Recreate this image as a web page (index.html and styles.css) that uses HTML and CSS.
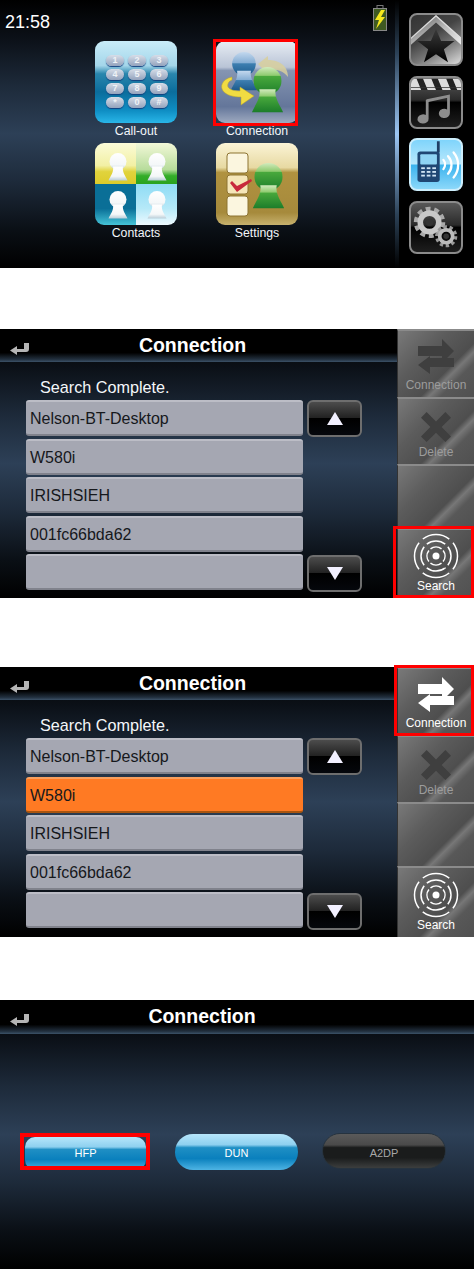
FILE: index.html
```html
<!DOCTYPE html>
<html lang="en">
<head>
    <meta charset="UTF-8">
    <meta name="viewport" content="width=device-width, initial-scale=1.0">
    <title>Bluetooth Connection Guide</title>
    <link rel="stylesheet" href="styles.css">
</head>
<body>
    <svg class="defs" width="0" height="0">
        <defs>
            <linearGradient id="g-green" x1="0" y1="0" x2="0" y2="1"><stop offset="0" stop-color="#d3ebbe"/><stop offset=".3" stop-color="#8fcb70"/><stop offset=".34" stop-color="#48a83c"/><stop offset="1" stop-color="#1c7d2a"/></linearGradient>
            <linearGradient id="g-blue" x1="0" y1="0" x2="0" y2="1"><stop offset="0" stop-color="#c3d8ee"/><stop offset=".45" stop-color="#86aed4"/><stop offset=".5" stop-color="#3d7eb0"/><stop offset="1" stop-color="#1d5a8c"/></linearGradient>
            <linearGradient id="g-white" x1="0" y1="0" x2="0" y2="1"><stop offset="0" stop-color="#fff"/><stop offset=".7" stop-color="#f4f7f8"/><stop offset="1" stop-color="#b9cdd8"/></linearGradient>
            <linearGradient id="g-silver" x1="0" y1="0" x2="1" y2="1"><stop offset="0" stop-color="#555"/><stop offset=".55" stop-color="#bbb"/><stop offset="1" stop-color="#eee"/></linearGradient>
            <linearGradient id="g-star" x1="0" y1="0" x2="0" y2="1"><stop offset="0" stop-color="#3a3a3a"/><stop offset="1" stop-color="#000"/></linearGradient>
            <symbol id="person" viewBox="0 0 40 56"><ellipse cx="20" cy="17" rx="17" ry="17"/><path d="M10 27C12 38 5 46 1 55H39C35 46 28 38 30 27Z"/></symbol>
            <symbol id="back" viewBox="0 0 20 14"><path d="M14 1h5v6q0 3-3 3H7v3L0 8.500 7 4v3h7z" fill="#b5b5b5"/></symbol>
            <symbol id="swap" viewBox="0 0 36 36"><path d="M0 7h24V0l12 12-12 12v-7H0zM36 19v9H12v7L0 26l12-9v2z" fill="currentColor"/></symbol>
            <symbol id="cross" viewBox="0 0 32 32"><path d="M6 0l10 10L26 0l6 6-10 10 10 10-6 6-10-10L6 32l-6-6 10-10L0 6z" fill="currentColor"/></symbol>
            <symbol id="radar" viewBox="0 0 46 46">
                <g fill="none" stroke="#fff" stroke-width="1.500" transform="rotate(-37.800 23 23)">
                    <circle cx="23" cy="23" r="9" pathLength="100" stroke-dasharray="21 4"/>
                    <circle cx="23" cy="23" r="15" pathLength="100" stroke-dasharray="21 4"/>
                    <circle cx="23" cy="23" r="21.500" pathLength="100" stroke-dasharray="21 4"/>
                </g>
                <circle cx="23" cy="23" r="3.500" fill="#fff"/>
            </symbol>
        </defs>
    </svg>

    <!-- home menu -->
    <div class="screen home">
        <div class="clock">21:58</div>
        <div class="apps">
            <div class="app">
                <div class="tile tile-keypad">
                    <div class="keys">
                        <span>1</span><span>2</span><span>3</span>
                        <span>4</span><span>5</span><span>6</span>
                        <span>7</span><span>8</span><span>9</span>
                        <span>*</span><span>0</span><span>#</span>
                    </div>
                </div>
                <div class="app-label">Call-out</div>
            </div>
            <div class="app">
                <div class="tile tile-connection hilite">
                    <svg viewBox="0 0 82 82" width="82" height="82">
                        <use href="#person" x="14" y="11" width="28" height="39" fill="url(#g-blue)"/>
                        <path d="M42 23L52 15V19C62 19 72 24 72 36 68 30 60 28 52 28V33Z" fill="#d8cf9c" opacity=".85"/>
                        <use href="#person" x="35" y="26" width="33" height="46" fill="url(#g-green)"/>
                        <path d="M16 36C6 38 3 46 8 51 11 54 17 56 25 56V64L38 55 24 46V50C19 50 14 49 12 46 11 43 13 40 16 39Z" fill="#f1dc42" stroke="#b9a62a" stroke-width=".5"/>
                    </svg>
                </div>
                <div class="app-label">Connection</div>
            </div>
            <div class="app">
                <div class="tile tile-contacts">
                    <div class="quad q1"><svg width="20" height="28"><use href="#person" width="20" height="28" fill="url(#g-white)"/></svg></div>
                    <div class="quad q2"><svg width="20" height="28"><use href="#person" width="20" height="28" fill="url(#g-white)"/></svg></div>
                    <div class="quad q3"><svg width="20" height="28"><use href="#person" width="20" height="28" fill="url(#g-white)"/></svg></div>
                    <div class="quad q4"><svg width="20" height="28"><use href="#person" width="20" height="28" fill="url(#g-white)"/></svg></div>
                </div>
                <div class="app-label">Contacts</div>
            </div>
            <div class="app">
                <div class="tile tile-settings">
                    <svg viewBox="0 0 82 82" width="82" height="82">
                        <rect x="11" y="10" width="21" height="20" rx="3" fill="#fbf6df" stroke="#8d7433"/>
                        <rect x="11" y="32" width="21" height="19" rx="3" fill="#f5e6b8" stroke="#8d7433"/>
                        <rect x="11" y="53" width="21" height="20" rx="3" fill="#fbf6df" stroke="#8d7433"/>
                        <path d="M16 38l5 5 14-7 1 2-15 11-7-9z" fill="#c8293b"/>
                        <use href="#person" x="36" y="19" width="33" height="48" fill="url(#g-green)"/>
                    </svg>
                </div>
                <div class="app-label">Settings</div>
            </div>
        </div>
        <div class="status">
            <svg class="battery" viewBox="0 0 14 26" width="14" height="26">
                <rect x="4" y="0.500" width="6" height="3" fill="none" stroke="#777"/>
                <rect x="0.500" y="3.500" width="13" height="22" fill="#3f5a22" stroke="#888"/>
                <path d="M8 5L2 15h4l-3 9 9-12H8l4-7z" fill="#f5e81c"/>
            </svg>
        </div>
        <div class="rail">
            <div class="rail-btn rail-btn-home">
                <svg viewBox="0 0 54 54" width="50" height="50">
                    <path d="M0 24L27 0l27 24v8L27 8 0 32z" fill="url(#g-silver)"/>
                    <path d="M0 26L27 2l27 24v-1.500L27 0 0 24.500z" fill="#ddd"/>
                    <path d="M27 15l5.500 13H47l-11.500 9 4.500 14-13-8.500L14 51l4.500-14L7 28h14.500z" fill="url(#g-star)"/>
                </svg>
            </div>
            <div class="rail-btn">
                <svg viewBox="0 0 54 54" width="50" height="50">
                    <path d="M0 2h54v12H0z" fill="#ddd"/>
                    <path d="M6 2h7l5 12h-7zM22 2h7l5 12h-7zM38 2h7l5 12h-7z" fill="#222"/>
                    <path d="M0 11h54v1H0z" fill="#333"/>
                    <path d="M17 24l25-5v3l-23 5v18a6 5 0 1 1-3-4V25zM39 22h3v17a6 5 0 1 1-3-4z" fill="#8d8d8d"/>
                </svg>
            </div>
            <div class="rail-btn rail-btn-on">
                <svg viewBox="0 0 54 54" width="53" height="53">
                    <path d="M28 2h3v12h-3z" fill="#1f3f66"/>
                    <rect x="7" y="13" width="24" height="33" rx="3" fill="#1f4673"/>
                    <rect x="10" y="16" width="18" height="11" rx="1" fill="#8fd4f4"/>
                    <g fill="#cfe4f4"><rect x="11" y="30" width="4" height="2"/><rect x="17" y="30" width="4" height="2"/><rect x="23" y="30" width="4" height="2"/><rect x="11" y="34" width="4" height="2"/><rect x="17" y="34" width="4" height="2"/><rect x="23" y="34" width="4" height="2"/><rect x="11" y="38" width="4" height="2"/><rect x="17" y="38" width="4" height="2"/><rect x="23" y="38" width="4" height="2"/></g>
                    <g fill="none" stroke="#fff" stroke-width="2.500" stroke-linecap="round"><path d="M35 22a8 8 0 0 1 0 10M40 18a14 14 0 0 1 0 19M46 14a21 21 0 0 1 0 27"/></g>
                </svg>
            </div>
            <div class="rail-btn">
                <svg viewBox="0 0 54 54" width="50" height="50">
                    <circle cx="20" cy="22" r="14" fill="none" stroke="#aaa" stroke-width="6" stroke-dasharray="5 3.800"/>
                    <circle cx="20" cy="22" r="10" fill="none" stroke="#c8c8c8" stroke-width="6"/>
                    <circle cx="20" cy="22" r="4" fill="#333"/>
                    <circle cx="38" cy="37" r="10" fill="none" stroke="#999" stroke-width="4" stroke-dasharray="3.500 2.800"/>
                    <circle cx="38" cy="37" r="7" fill="none" stroke="#bbb" stroke-width="4"/>
                    <circle cx="38" cy="37" r="3" fill="#333"/>
                </svg>
            </div>
        </div>
    </div>

    <!-- search finished -->
    <div class="screen device-screen first-list">
        <div class="main">
            <div class="topbar">
                <svg class="back" width="20" height="14"><use href="#back"/></svg>
                <div class="title">Connection</div>
            </div>
            <div class="note">Search Complete.</div>
            <div class="list-wrap">
                <div class="devices">
                    <div class="device">Nelson-BT-Desktop</div>
                    <div class="device">W580i</div>
                    <div class="device">IRISHSIEH</div>
                    <div class="device">001fc66bda62</div>
                    <div class="device"></div>
                </div>
                <div class="pager">
                    <div class="page-btn"><span class="tri-up"></span></div>
                    <div class="page-btn"><span class="tri-down"></span></div>
                </div>
            </div>
        </div>
        <div class="panel">
            <div class="panel-item off pi-a"><svg width="36" height="36"><use href="#swap"/></svg><span>Connection</span></div>
            <div class="panel-item off pi-b"><svg width="30" height="30"><use href="#cross"/></svg><span>Delete</span></div>
            <div class="panel-item pi-c"></div>
            <div class="panel-item pi-d hilite"><svg width="46" height="46"><use href="#radar"/></svg><span>Search</span></div>
        </div>
    </div>

    <!-- device selected -->
    <div class="screen device-screen second-list">
        <div class="main">
            <div class="topbar">
                <svg class="back" width="20" height="14"><use href="#back"/></svg>
                <div class="title">Connection</div>
            </div>
            <div class="note">Search Complete.</div>
            <div class="list-wrap">
                <div class="devices">
                    <div class="device">Nelson-BT-Desktop</div>
                    <div class="device picked">W580i</div>
                    <div class="device">IRISHSIEH</div>
                    <div class="device">001fc66bda62</div>
                    <div class="device"></div>
                </div>
                <div class="pager">
                    <div class="page-btn"><span class="tri-up"></span></div>
                    <div class="page-btn"><span class="tri-down"></span></div>
                </div>
            </div>
        </div>
        <div class="panel">
            <div class="panel-item pi-a hilite"><svg width="36" height="36"><use href="#swap"/></svg><span>Connection</span></div>
            <div class="panel-item off pi-b"><svg width="30" height="30"><use href="#cross"/></svg><span>Delete</span></div>
            <div class="panel-item pi-c"></div>
            <div class="panel-item pi-d"><svg width="46" height="46"><use href="#radar"/></svg><span>Search</span></div>
        </div>
    </div>

    <!-- profile choice -->
    <div class="screen profile-screen">
        <div class="topbar wide">
            <svg class="back" width="20" height="14"><use href="#back"/></svg>
            <div class="title">Connection</div>
        </div>
        <div class="profiles">
            <div class="pill pill-hfp pill-blue hilite">HFP</div>
            <div class="pill pill-dun pill-blue">DUN</div>
            <div class="pill pill-a2dp pill-dark">A2DP</div>
        </div>
    </div>
</body>
</html>
```

FILE: styles.css
```css
* { margin: 0; padding: 0; box-sizing: border-box; }
body { margin: 0; background: #fff; font-family: "Liberation Sans", Arial, sans-serif; color: #fff; width: 476px; }
.defs { display: block; height: 0; }

.screen { width: 474px; background: linear-gradient(180deg, #000 0%, #0b1017 14%, #1d2a3a 32%, #2d4057 50%, #1d2a3a 68%, #0a0f15 86%, #000 100%); }
.hilite { position: relative; }
.hilite::after { content: ""; position: absolute; border: 3px solid #f00; }

/* home */
.home { display: flex; height: 268px; margin-bottom: 61px; }
.clock { width: 95px; padding: 12px 0 0 5px; font-size: 18px; line-height: 20px; }
.apps { display: grid; grid-template-columns: 82px 82px; column-gap: 39px; padding-top: 41px; align-content: start; }
.app { height: 102px; }
.app-label { height: 20px; font-size: 12.300px; line-height: 17px; text-align: center; color: #f2f6fa; }
.tile { display: block; width: 82px; height: 82px; border-radius: 9px; overflow: hidden; }
.tile svg { display: block; }
.tile.hilite { overflow: visible; }
.tile.hilite::after { top: -2px; left: -3px; right: 0; bottom: -3px; }
.tile-keypad { padding: 14px 7px 0 11px; background: linear-gradient(180deg, #c9ecf8 0%, #a4d6ea 30%, #2a86ad 40%, #0b6d9c 62%, #0f8ec4 85%, #29b6e8 100%); }
.keys { display: grid; grid-template-columns: repeat(3, 18px); grid-auto-rows: 11px; column-gap: 4px; row-gap: 3px; }
.keys span { border-radius: 6px; background: linear-gradient(180deg, #d6dde8, #94a3bd); box-shadow: 0 1px 1px #12407f; font-size: 9px; line-height: 11px; font-weight: bold; color: #eef2f6; text-align: center; }
.tile-connection { background: linear-gradient(180deg, #e8edf4 0%, #b9c4d6 32%, #8595b2 36%, #64769a 80%, #9eaac0 100%); }
.tile-contacts { display: grid; grid-template-columns: 1fr 1fr; grid-template-rows: 1fr 1fr; }
.quad { display: flex; align-items: center; justify-content: center; }
.q1 { padding: 7px 0 0 4px; background: linear-gradient(180deg, #fbfbd8 0%, #f2f0a4 55%, #e1d33d 70%, #dccb2a 100%); }
.q2 { padding-top: 7px; background: linear-gradient(180deg, #f2f8d8 0%, #b7dc9b 65%, #33ad29 80%, #2aa31f 100%); }
.q3 { padding-left: 4px; background: linear-gradient(180deg, #0a6f97 0%, #0a6f97 60%, #45c4d8 100%); }
.q4 { background: linear-gradient(180deg, #8fdcf5 0%, #b6e9f8 60%, #eefaff 100%); }
.tile-settings { background: linear-gradient(180deg, #fbf4d6 0%, #e7d9a2 30%, #b0923f 36%, #a68a3c 85%, #c7b26e 100%); }

.status { flex: 1; display: flex; justify-content: flex-end; padding: 5px 8px 0 0; }
.battery { display: block; }
.rail { position: relative; width: 79px; padding: 13px 11px 0 14px; background: #000; display: flex; flex-direction: column; gap: 9.500px; }
.rail::before { content: ""; position: absolute; left: 0; top: 0; bottom: 0; width: 4px; background: linear-gradient(180deg, #000 0%, #2c4258 20%, #9cc6f4 50%, #2c4258 80%, #000 100%); }
.rail-btn { width: 54px; height: 53px; border: 2px solid #8b8b8b; border-radius: 8px; overflow: hidden; background: linear-gradient(180deg, #585858 0%, #2a2a2a 45%, #000 50%, #1e1e1e 100%); display: flex; align-items: center; justify-content: center; }
.rail-btn-home { background: linear-gradient(150deg, #333 0%, #444 40%, #777 65%, #ddd 100%); }
.rail-btn-on { border-color: #cdeefc; background: linear-gradient(180deg, #7fd4fb 0%, #b8e8fc 48%, #3db4ee 52%, #8cd8fa 100%); }

/* device list */
.device-screen { display: flex; height: 269px; }
.first-list { margin-bottom: 69px; }
.second-list { height: 270px; margin-bottom: 63px; }
.main { flex: 1; }
.topbar { height: 33px; display: flex; align-items: center; padding-left: 10px; background: linear-gradient(180deg, #000 0%, #000 72%, #22303f 92%, #3c5268 100%); }
.back { display: block; margin-top: 6px; }
.title { width: 325px; margin-top: -2px; font-size: 19.500px; font-weight: bold; text-align: center; line-height: 30px; }
.note { height: 38px; padding: 16px 0 0 40px; font-size: 16.200px; line-height: 19px; color: #f4f7fa; }
.list-wrap { display: flex; gap: 4px; padding-left: 26px; }
.devices { width: 277px; display: flex; flex-direction: column; gap: 2.500px; }
.device { height: 36px; padding-left: 4px; border-radius: 3px; background: #a5a7b2; border-top: 2px solid #bcbdc6; border-bottom: 2px solid #80828c; font-size: 16px; line-height: 33px; color: #16181c; }
.device.picked { background: #ff7a23; border-top-color: #f7a060; border-bottom-color: #a85510; }
.pager { width: 55px; display: flex; flex-direction: column; justify-content: space-between; height: 192px; }
.page-btn { height: 37px; display: flex; align-items: center; justify-content: center; border: 2px solid #6e6e6e; border-radius: 6px; background: linear-gradient(180deg, #4c4c4c 0%, #222 48%, #000 50%, #05070c 100%); }
.tri-up { border: 8.500px solid transparent; border-top: 0; border-bottom: 13px solid #f2f0ff; }
.tri-down { border: 8.500px solid transparent; border-bottom: 0; border-top: 13px solid #f2f0ff; }

.panel { width: 77px; display: flex; flex-direction: column; background: #555; }
.panel-item { display: flex; flex-direction: column; align-items: center; justify-content: flex-end; height: 67px; border-top: 2px solid #8b8b8b; border-left: 1px solid #333; background: linear-gradient(135deg, #797979 0%, #5c5c5c 35%, #4e4e4e 62%, #777 68%, #585858 76%, #505050 100%); color: #fff; font-size: 12px; }
.panel-item span { line-height: 15px; padding-bottom: 4px; }
.panel-item svg { display: block; flex: none; color: #fff; margin-bottom: 3px; }
.pi-a { height: 68px; }
.pi-c { height: 64px; }
.pi-d { height: 71px; flex: 1; }
.pi-d svg { margin-bottom: 0; }
.panel-item.off span { color: #9c9c9c; }
.panel-item.off svg { color: #3f3f3f; }
.pi-d.hilite::after { top: -4px; left: -5px; right: 0; bottom: 0; }
.pi-a.hilite::after { top: -4px; left: -4px; right: 0; bottom: -1px; }

/* profile picker */
.profile-screen { height: 269px; }
.topbar.wide { height: 34px; }
.topbar.wide .title { width: 344px; margin-top: -3px; }
.profiles { display: grid; grid-template-columns: 150px 147px 124px; padding: 100px 0 0 25px; }
.pill { height: 36px; border-radius: 18px; font-size: 11px; line-height: 38px; text-align: center; }
.pill-hfp { width: 121px; height: 33px; margin-top: 3px; border-radius: 10px; line-height: 33px; }
.pill-hfp::after { top: -4px; left: -5px; right: -4px; bottom: 0; border-width: 4px; }
.pill-dun { width: 123px; }
.pill-a2dp { width: 124px; margin-top: -1px; }
.pill-blue { background: linear-gradient(180deg, #b6e6fb 0%, #8ed0ef 30%, #1f8fc4 38%, #0a80bd 68%, #4eb4e4 100%); }
.pill-dark { background: linear-gradient(180deg, #5a5a5a 0%, #4a4a4a 32%, #1a1c1c 40%, #1a1c1c 70%, #3c3e3e 100%); color: #a8a8a8; border: 1px solid #26333f; }
```
